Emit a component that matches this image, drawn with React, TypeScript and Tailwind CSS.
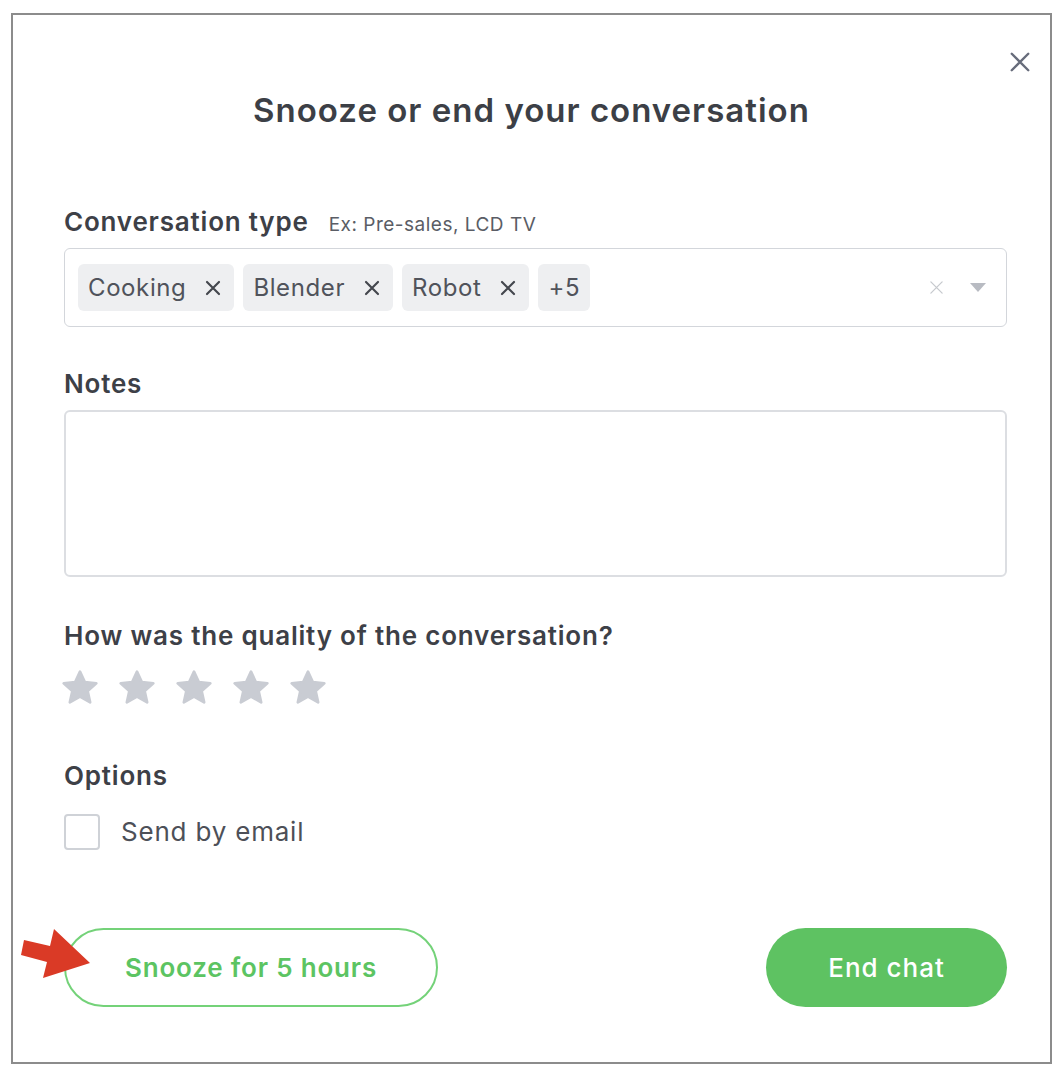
import React from "react";

function XIcon({ size, stroke, color }: { size: number; stroke: number; color: string }) {
  return (
    <svg width={size} height={size} viewBox="0 0 24 24" fill="none">
      <path d="M3 3L21 21M21 3L3 21" stroke={color} strokeWidth={stroke} strokeLinecap="round" />
    </svg>
  );
}

function Star() {
  return (
    <svg width="40" height="40" viewBox="0 0 24 24">
      <path
        d="M12 2.2l2.9 6.3 6.9.7-5.2 4.6 1.5 6.8L12 17.1l-6.1 3.5 1.5-6.8-5.2-4.6 6.9-.7z"
        fill="#c9ccd3"
        stroke="#c9ccd3"
        strokeWidth="1.6"
        strokeLinejoin="round"
      />
    </svg>
  );
}

function Chip({ label, removable = true }: { label: string; removable?: boolean }) {
  return (
    <div
      className={
        removable
          ? "flex h-[47px] items-center rounded-[6px] bg-[#eeeff1] pl-[10px] pr-[13px]"
          : "flex h-[47px] items-center rounded-[6px] bg-[#eeeff1] pl-[10px] pr-[10px]"
      }
    >
      <span className="text-[24px] leading-none tracking-[0.6px] text-[#50535b]">{label}</span>
      {removable && (
        <span className="ml-[19px] flex items-center">
          <XIcon size={16} stroke={3.2} color="#44474e" />
        </span>
      )}
    </div>
  );
}

export default function App() {
  return (
    <div
      className="min-h-[1074px] w-[1064px] bg-white pl-[11px] pt-[13px]"
      style={{ fontFamily: "Inter, sans-serif" }}
    >
      <div className="relative h-[1051px] w-[1041px] border-2 border-[#8c8c8c] bg-white pl-[51px] pr-[43px]">
        <button className="absolute right-[17px] top-[34px] flex h-[26px] w-[26px] items-center justify-center">
          <XIcon size={22} stroke={2.6} color="#676c7b" />
        </button>

        <h1 className="-ml-[51px] -mr-[43px] mt-[75px] h-[40px] text-center text-[33px] font-semibold leading-[40px] tracking-[1px] text-[#3c3f46]">
          Snooze or end your conversation
        </h1>

        <div className="mt-[76px] flex h-[32px] items-baseline leading-[32px]">
          <span className="text-[26px] font-semibold tracking-[0.8px] text-[#3d4047]">Conversation type</span>
          <span className="ml-[20px] text-[19px] tracking-[0.5px] text-[#5a5d65]">Ex: Pre-sales, LCD TV</span>
        </div>

        <div className="mt-[10px] flex h-[79px] items-center rounded-[6px] border border-[#d3d6db] pl-[13px] pr-[20px]">
          <div className="flex flex-1 items-center gap-[9px]">
            <Chip label="Cooking" />
            <Chip label="Blender" />
            <Chip label="Robot" />
            <Chip label="+5" removable={false} />
          </div>
          <span className="flex items-center">
            <XIcon size={15} stroke={2} color="#c6c9ce" />
          </span>
          <svg className="ml-[26px]" width="16" height="10" viewBox="0 0 16 10">
            <path d="M0 0H16L8 9z" fill="#b8bbc2" />
          </svg>
        </div>

        <div className="mt-[41px] h-[32px] text-[26px] font-semibold leading-[32px] tracking-[0.8px] text-[#3d4047]">Notes</div>
        <div className="mt-[10px] h-[167px] rounded-[6px] border-2 border-[#dcdee2]"></div>

        <div className="mt-[43px] h-[32px] text-[26px] font-semibold leading-[32px] tracking-[0.8px] text-[#3d4047]">
          How was the quality of the conversation?
        </div>
        <div className="-ml-[4px] mt-[16px] flex gap-[17px]">
          <Star />
          <Star />
          <Star />
          <Star />
          <Star />
        </div>

        <div className="mt-[52px] h-[32px] text-[26px] font-semibold leading-[32px] tracking-[0.8px] text-[#3d4047]">Options</div>
        <div className="mt-[22px] flex items-center">
          <div className="h-[36px] w-[36px] rounded-[4px] border-2 border-[#cfd2d7] bg-white"></div>
          <span className="ml-[21px] text-[26px] leading-none tracking-[0.8px] text-[#4d5058]">Send by email</span>
        </div>

        <div className="mt-[78px] flex items-center justify-between">
          <button className="flex h-[79px] w-[374px] items-center justify-center rounded-full border-2 border-[#74d279] bg-white text-[26px] font-semibold tracking-[0.8px] text-[#5cc462]">
            Snooze for 5 hours
          </button>
          <button className="flex h-[79px] w-[241px] items-center justify-center rounded-full bg-[#5ec262] text-[26px] font-medium tracking-[1px] text-white">
            End chat
          </button>
        </div>

        <svg className="absolute left-[6px] top-[912px]" width="80" height="52" viewBox="0 0 80 52">
          <polygon points="5,25 31,31 35,14 71,48 24,63 28,47 2,40" fill="#da3a26" transform="translate(0,-12)" />
        </svg>
      </div>
    </div>
  );
}
